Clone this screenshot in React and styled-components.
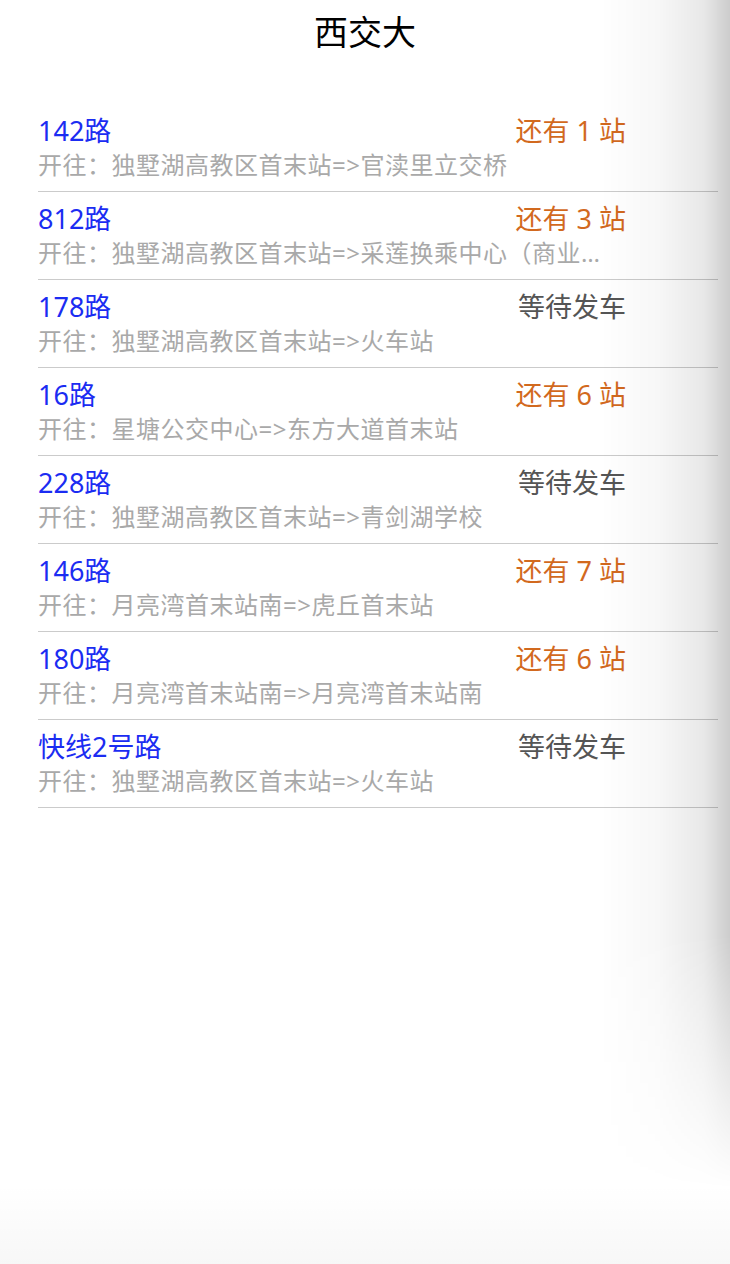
import styled, { createGlobalStyle } from 'styled-components'

const GlobalStyle = createGlobalStyle`
  html, body {
    margin: 0;
    padding: 0;
    background: #fff;
  }

  body {
    font-family: "Noto Sans", "Noto Sans CJK SC", sans-serif;
  }
`

const lines = [
  { name: '142路', route: '开往：独墅湖高教区首末站=>官渎里立交桥', stops: 1 },
  { name: '812路', route: '开往：独墅湖高教区首末站=>采莲换乘中心（商业街）', stops: 3 },
  { name: '178路', route: '开往：独墅湖高教区首末站=>火车站', stops: null },
  { name: '16路', route: '开往：星塘公交中心=>东方大道首末站', stops: 6 },
  { name: '228路', route: '开往：独墅湖高教区首末站=>青剑湖学校', stops: null },
  { name: '146路', route: '开往：月亮湾首末站南=>虎丘首末站', stops: 7 },
  { name: '180路', route: '开往：月亮湾首末站南=>月亮湾首末站南', stops: 6 },
  { name: '快线2号路', route: '开往：独墅湖高教区首末站=>火车站', stops: null },
]

// Styles
const Page = styled.div`
  position: relative;
  min-height: 100vh;
  overflow: hidden;
  background: #fff;
`

const Header = styled.header`
  height: 64px;
  line-height: 64px;
  text-align: center;
  font-size: 34px;
  color: #000;
`

const List = styled.ul`
  list-style: none;
  margin: 40px 12px 0 38px;
  padding: 0;
`

const Row = styled.li`
  display: flex;
  flex-direction: column;
  padding: 11px 0 8px;
  border-bottom: 1px solid #cbcbcb;
`

const TopLine = styled.div`
  display: flex;
  justify-content: space-between;
  align-items: center;
  height: 32px;
  padding-right: 92px;
`

const LineName = styled.span`
  font-size: 27px;
  line-height: 32px;
  color: #1b2cf2;
`

const Status = styled.span`
  font-size: 27px;
  line-height: 32px;
  color: ${({ $waiting }) => ($waiting ? '#555' : '#d2691e')};
  white-space: pre;
`

const Route = styled.div`
  font-size: 24px;
  line-height: 36px;
  height: 36px;
  letter-spacing: 0.5px;
  color: #a9a9a9;
  white-space: nowrap;
  overflow: hidden;
  text-overflow: ellipsis;
  max-width: 580px;
`

const EdgeShadow = styled.div`
  position: absolute;
  top: 0;
  right: 0;
  bottom: 0;
  width: 130px;
  pointer-events: none;
  background: linear-gradient(
    to right,
    rgba(0, 0, 0, 0) 0%,
    rgba(0, 0, 0, 0.03) 45%,
    rgba(0, 0, 0, 0.09) 80%,
    rgba(0, 0, 0, 0.2) 100%
  );
  -webkit-mask-image: linear-gradient(to bottom, #000 0%, #000 74%, transparent 94%);
  mask-image: linear-gradient(to bottom, #000 0%, #000 74%, transparent 94%);
`

const BottomShade = styled.div`
  position: absolute;
  left: 0;
  right: 0;
  bottom: 0;
  height: 80px;
  pointer-events: none;
  background: linear-gradient(to bottom, rgba(0, 0, 0, 0), rgba(0, 0, 0, 0.03));
`

const App = () => (
  <Page>
    <GlobalStyle />
    <Header>西交大</Header>
    <List>
      {lines.map((line) => (
        <Row key={line.name}>
          <TopLine>
            <LineName>{line.name}</LineName>
            <Status $waiting={line.stops === null}>
              {line.stops === null ? '等待发车' : `还有 ${line.stops} 站`}
            </Status>
          </TopLine>
          <Route>{line.route}</Route>
        </Row>
      ))}
    </List>
    <EdgeShadow />
    <BottomShade />
  </Page>
)

export default App
